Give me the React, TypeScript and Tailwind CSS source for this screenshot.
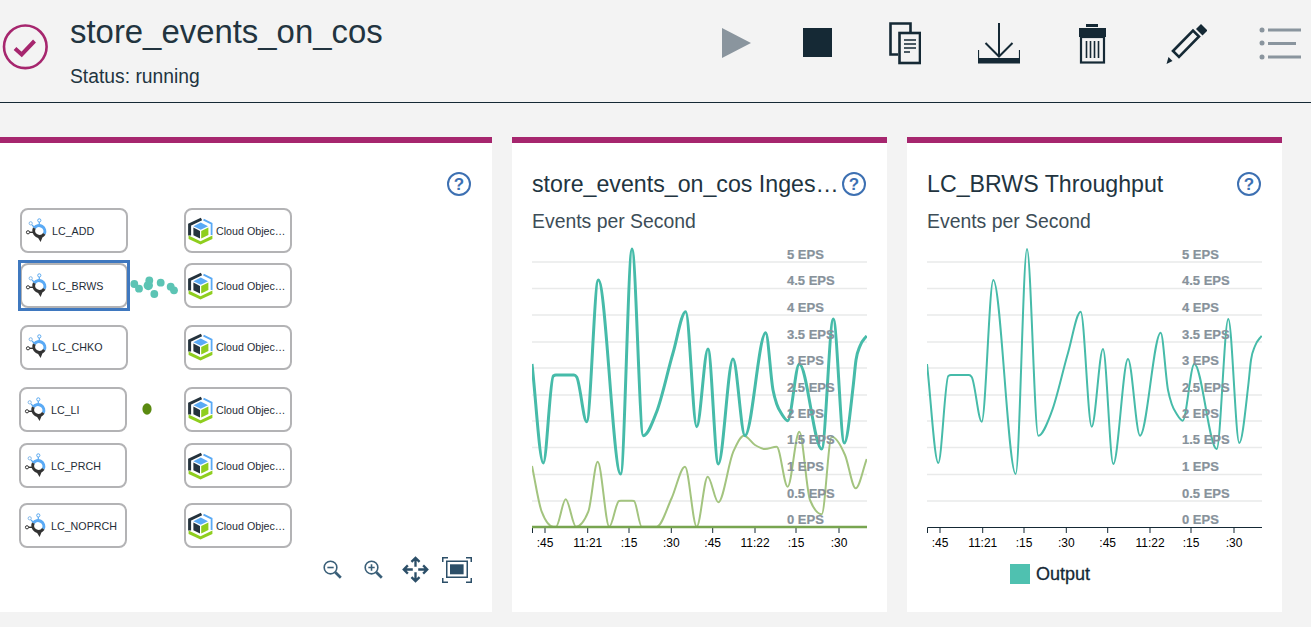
const teal: [number, number][] = [
  [532, 364], [543.3, 463], [553.3, 376], [556, 375], [574, 375], [576.7, 377], [586.7, 421.7], [598.3, 280], [620.7, 474], [632, 249],
  [643.3, 435.7], [656.7, 411.7], [673, 353], [685.7, 311.7], [696.7, 426.7], [708, 349], [718.3, 464], [733, 359], [745, 435.7],
  [765.7, 332.7], [773, 390], [776.7, 404], [781.7, 414], [787.7, 420.7], [799.3, 364], [821.7, 449], [833.3, 319], [844.3, 443], [853.3, 385], [856, 360], [860, 346], [866.7, 335.7],
];
const green: [number, number][] = [
  [532, 466], [541.7, 511.7], [553.3, 526.7], [556, 526.7], [565.7, 499.3], [576, 526.7], [588.3, 511.7], [597.7, 461.7], [609.3, 526.7],
  [619, 501], [621, 500.7], [632, 500.7], [634, 501], [641.7, 526.7], [656.7, 526.7], [671.7, 498], [685, 466.7], [696.7, 526.7],
  [707.7, 476.7], [718.3, 502.3], [733.3, 451.7], [744, 435.7], [755, 445], [765, 449], [776.7, 446.7], [787.7, 486.7], [799.3, 431.7],
  [810, 500], [821.7, 514.3], [831.7, 436.7], [845, 455], [855.7, 488.3], [866.7, 459],
];

function monotone(points: [number, number][]) {
  const n = points.length;
  const s: number[] = [];
  const w: number[] = [];
  for (let i = 0; i < n - 1; i++) {
    w.push(points[i + 1][0] - points[i][0]);
    s.push((points[i + 1][1] - points[i][1]) / w[i]);
  }
  const m: number[] = [s[0]];
  for (let i = 1; i < n - 1; i++) {
    const p = (w[i - 1] * s[i] + w[i] * s[i - 1]) / (w[i - 1] + w[i]);
    m.push((Math.sign(s[i - 1]) + Math.sign(s[i])) * Math.min(Math.abs(s[i - 1]), Math.abs(s[i]), 0.5 * Math.abs(p)));
  }
  m.push(s[n - 2]);
  let path = `M${points[0][0]} ${points[0][1]}`;
  for (let i = 0; i < n - 1; i++) {
    const h = w[i] / 3;
    path += `C${points[i][0] + h} ${points[i][1] + m[i] * h} ${points[i + 1][0] - h} ${points[i + 1][1] - m[i + 1] * h} ${points[i + 1][0]} ${points[i + 1][1]}`;
  }
  return path;
}

const grid = [262, 288.5, 315, 342, 368, 395, 421, 447.5, 474.5, 501];
const eps = [
  ["5 EPS", 259], ["4.5 EPS", 285], ["4 EPS", 312], ["3.5 EPS", 339], ["3 EPS", 365], ["2.5 EPS", 392],
  ["2 EPS", 418], ["1.5 EPS", 444], ["1 EPS", 471], ["0.5 EPS", 498], ["0 EPS", 524],
] as const;
const ticks = [
  [545, ":45"], [587.7, "11:21"], [629, ":15"], [671.3, ":30"], [712.7, ":45"], [755, "11:22"], [796, ":15"], [839, ":30"],
] as const;

function Chart({ both }: { both: boolean }) {
  return (
    <svg viewBox="532 245 335 310" className="w-[335px] h-[310px] block">
      {grid.map((y) => (
        <line key={y} x1="532" x2="867" y1={y} y2={y} stroke="#e9eaea" strokeWidth="1.4" />
      ))}
      <path d="M532.5 533V527.5H867" fill="none" stroke="#152935" strokeWidth="1" />
      {ticks.map(([x]) => (
        <line key={x} x1={x} x2={x} y1="527" y2="533" stroke="#152935" strokeWidth="1" />
      ))}
      {both && <path d={monotone(green)} fill="none" stroke="#a3c47f" strokeWidth="2" />}
      {both && <line x1="532" x2="867" y1="527" y2="527" stroke="#78a550" strokeWidth="2.4" />}
      <path d={monotone(teal)} fill="none" stroke="#46bba9" strokeWidth={both ? 3 : 2} />
      {eps.map(([t, y]) => (
        <text key={t} x="787" y={y} fontSize="13" fontWeight="700" fill="#87929b" stroke="#87929b" strokeWidth="0.2" fontFamily="'Liberation Sans', sans-serif">{t}</text>
      ))}
      {ticks.map(([x, t]) => (
        <text key={x} x={x} y="546.5" fontSize="12" textAnchor="middle" fill="#000" fontFamily="'Liberation Sans', sans-serif">{t}</text>
      ))}
    </svg>
  );
}

function Help() {
  return (
    <div className="w-6 h-6 shrink-0 rounded-full border-2 border-[#3d70b2] flex items-center justify-center text-[#3d70b2] text-[17px] font-bold leading-none">?</div>
  );
}

function LcIcon() {
  return (
    <svg viewBox="0 0 28 30" className="w-[28px] h-[30px] ml-[4px] shrink-0">
      <line x1="15.3" y1="6" x2="15.3" y2="10" stroke="#5aa9f0" strokeWidth="1.2" />
      <line x1="8" y1="9" x2="11" y2="12" stroke="#5aa9f0" strokeWidth="1.2" />
      <line x1="5.5" y1="16.3" x2="10" y2="16.3" stroke="#333" strokeWidth="1.4" />
      <circle cx="15.3" cy="4.4" r="1.6" fill="#fff" stroke="#5aa9f0" strokeWidth="1" />
      <circle cx="6.7" cy="7.3" r="1.6" fill="#fff" stroke="#7fb6e8" strokeWidth="1" />
      <circle cx="4" cy="16.3" r="1.6" fill="#fff" stroke="#333" strokeWidth="1" />
      <path d="M10.3 12.1A5.8 5.8 0 0 1 20.3 17.9" fill="none" stroke="#5aaaf5" strokeWidth="3" />
      <path d="M20.3 17.9A5.8 5.8 0 0 1 10.3 12.1" fill="none" stroke="#333" strokeWidth="3" />
      <path d="M13.5 21L16.6 26L19 20Z" fill="#333" />
    </svg>
  );
}

function CubeIcon() {
  return (
    <svg viewBox="0 0 28 30" className="w-[28px] h-[30px] ml-[4px] shrink-0">
      <path d="M13.5 3L1.6 8.6V19.5" fill="none" stroke="#25333d" strokeWidth="3" />
      <path d="M15.5 3.6L23.6 7.6V19" fill="none" stroke="#5aaaf5" strokeWidth="1.8" />
      <path d="M12.7 6.6L20 10.3L12.7 13.8L5.4 10.3Z" fill="#5aaaf5" />
      <path d="M5.4 11.6L12 14.9V22.6L5.4 19.3Z" fill="#25333d" />
      <path d="M13.2 14.9L20.4 11.4V19L13.2 22.6Z" fill="#8fce1e" />
      <path d="M0.6 19.6V23L12.5 28.4L24.4 23V19.6L12.5 25.2Z" fill="#8fce1e" />
    </svg>
  );
}

const nodes = [
  { x: 20, y: 71, w: "LC_ADD", selected: false },
  { x: 20, y: 126, w: "LC_BRWS", selected: true },
  { x: 20, y: 187.5, w: "LC_CHKO", selected: false },
  { x: 19, y: 250, w: "LC_LI", selected: false },
  { x: 19, y: 306, w: "LC_PRCH", selected: false },
  { x: 19, y: 366, w: "LC_NOPRCH", selected: false },
];

function Node({ x, y, label, selected, cube }: { x: number; y: number; label: string; selected?: boolean; cube?: boolean }) {
  return (
    <div
      className="absolute w-[107.5px] h-[45px] bg-white rounded-[8px] border-2 border-[#b3b3b5] flex items-center box-border text-[#1f2d37] text-[10.7px]"
      style={{ left: x, top: y }}
    >
      {selected && <div className="absolute -left-[4px] -right-[4px] -top-[5px] -bottom-[5px] border-[3px] border-[#3f78bf]" />}
      <div className="-ml-[2px] flex items-center">
        {cube ? <CubeIcon /> : <LcIcon />}
        <span className="whitespace-nowrap mt-[1px]">{label}</span>
      </div>
    </div>
  );
}

function Panel({ children }: { children: React.ReactNode }) {
  return <section className="relative h-[475px] bg-white border-t-[6px] border-[#a6266e] shrink-0 flex flex-col">{children}</section>;
}

function ChartPanel({ title, both, legend }: { title: string; both: boolean; legend?: boolean }) {
  return (
    <Panel>
      <div className="w-[375px] pl-5 pr-[21px] pt-[29px] flex items-center justify-between text-[#22343f]">
        <h2 className="text-[23.2px] leading-6 whitespace-nowrap">{title}</h2>
        <Help />
      </div>
      <div className="pl-5 mt-[13px] text-[19.4px] leading-6 text-[#3d4d57]">Events per Second</div>
      <div className="pl-5 mt-[12px]"><Chart both={both} /></div>
      {legend && (
        <div className="flex items-center pl-[103px] mt-[9px]">
          <div className="w-[20px] h-[20px] bg-[#4fc1b0]" />
          <span className="ml-[6px] text-[18px] leading-5 text-[#152935] [-webkit-text-stroke:0.3px_#152935]">Output</span>
        </div>
      )}
    </Panel>
  );
}

export default function App() {
  return (
    <div className="w-[1311px] h-[627px] overflow-hidden bg-[#f3f3f3] font-['Liberation_Sans',sans-serif]">
      <header className="h-[103px] border-b border-[#152935] flex items-start">
        <svg viewBox="0 0 50 50" className="w-[50px] h-[50px] mt-[22px] shrink-0">
          <circle cx="25.3" cy="24.8" r="21.3" fill="none" stroke="#a6266e" strokeWidth="2.6" />
          <path d="M15 26.5L21.7 32.5L34.5 19" fill="none" stroke="#a6266e" strokeWidth="4" />
        </svg>
        <div className="ml-[20px]">
          <h1 className="mt-[14px] text-[32.9px] leading-9 text-[#22343f]">store_events_on_cos</h1>
          <p className="mt-[15px] text-[19.3px] leading-6 text-[#22343f]">Status: running</p>
        </div>
        <div className="ml-auto mr-[10px] mt-[22px] flex items-start">
          <svg viewBox="722 22 29 44" className="w-[29px] h-[44px]">
            <path d="M722 28V58L751 43Z" fill="#8a959e" />
          </svg>
          <svg viewBox="803 22 29 44" className="w-[29px] h-[44px] ml-[52px]">
            <rect x="803" y="28" width="29" height="29" fill="#152935" />
          </svg>
          <svg viewBox="889 22 32 44" className="w-[32px] h-[44px] ml-[57px]" fill="none" stroke="#152935">
            <path d="M898 54.5H890.5V23.5H910.5V32" strokeWidth="2.6" />
            <rect x="899.5" y="33" width="20.5" height="30" strokeWidth="2.6" />
            <path d="M904 40H916M904 44H916M904 48H916M904 52H910" strokeWidth="1.5" />
          </svg>
          <svg viewBox="978 22 42 44" className="w-[42px] h-[44px] ml-[57px]" fill="none" stroke="#152935">
            <path d="M999 23V56M985.5 43L999 56.5L1012.5 43" strokeWidth="2" />
            <path d="M978.5 50V60M1019.5 50V60" strokeWidth="1.2" />
            <rect x="978" y="58" width="42" height="5.5" fill="#152935" stroke="none" />
          </svg>
          <svg viewBox="1079 22 27 44" className="w-[27px] h-[44px] ml-[59px]" fill="none" stroke="#152935">
            <rect x="1086" y="24" width="12" height="3" fill="#152935" stroke="none" />
            <rect x="1079" y="28" width="27" height="9" fill="#152935" stroke="none" />
            <rect x="1081" y="37" width="23" height="25.5" strokeWidth="2.2" />
            <path d="M1086.5 41V58M1090.5 41V58M1094.5 41V58M1098.5 41V58" strokeWidth="1.6" />
          </svg>
          <svg viewBox="1166 22 41 44" className="w-[41px] h-[44px] ml-[60px]" fill="none" stroke="#152935">
            <path d="M1174 55L1194 34.5L1200 40.5L1180 61Z" strokeWidth="2.6" transform="translate(-1 -4)" />
            <path d="M1196 29L1201 24L1207.5 30.5L1202.5 35.5Z" fill="#152935" stroke="none" />
            <path d="M1166.5 64L1168.5 57L1172.5 61Z" fill="#152935" stroke="none" />
          </svg>
          <svg viewBox="1259 22 42 44" className="w-[42px] h-[44px] ml-[52px]" fill="#8a959e">
            <circle cx="1262" cy="30" r="2.5" />
            <circle cx="1262" cy="43" r="2.5" />
            <circle cx="1262" cy="57" r="2.5" />
            <rect x="1268" y="28.5" width="33" height="3" />
            <rect x="1268" y="42" width="28" height="3" />
            <rect x="1268" y="55.5" width="33" height="3" />
          </svg>
        </div>
      </header>
      <main className="flex gap-5 pt-[34px]">
        <Panel>
          <div className="w-[492px] flex-1 flex flex-col">
            <div className="flex justify-end pr-[21px] pt-[29px]"><Help /></div>
            <div className="relative flex-1">
              {nodes.map((n) => (
                <Node key={n.w} x={n.x} y={n.y - 59} label={n.w} selected={n.selected} />
              ))}
              {nodes.map((n, i) => (
                <Node key={i} x={184} y={n.y - 59} label="Cloud Objec…" cube />
              ))}
              <svg viewBox="130 275 50 25" className="absolute left-[130px] top-[79px] w-[50px] h-[25px] blur-[0.6px]" fill="#5cc4b4">
                <circle cx="134.3" cy="284" r="3.9" /><circle cx="139" cy="288.7" r="3.9" />
                <circle cx="148.3" cy="285.5" r="4.7" /><circle cx="149.3" cy="280.5" r="3.9" />
                <circle cx="160.7" cy="282.7" r="3.9" /><circle cx="154.3" cy="294" r="3.9" />
                <circle cx="170.7" cy="286.7" r="3.9" /><circle cx="174" cy="290.3" r="3.9" />
              </svg>
              <svg viewBox="0 0 12 14" className="absolute left-[141px] top-[206px] w-[12px] h-[14px] blur-[0.5px]">
                <ellipse cx="6" cy="7" rx="4.6" ry="5.8" fill="#5a8a10" />
              </svg>
            </div>
            <div className="flex justify-end items-center pr-[20px] pb-[29px]">
              <svg viewBox="0 0 24 24" className="w-[19px] h-[19px]" fill="none" stroke="#3a5f78">
                <circle cx="9.5" cy="9.5" r="8" strokeWidth="2" />
                <path d="M5.5 9.5H13.5" strokeWidth="2" />
                <path d="M15.5 15.5L22.5 22.5" strokeWidth="3.4" />
              </svg>
              <svg viewBox="0 0 24 24" className="w-[19px] h-[19px] ml-[22px]" fill="none" stroke="#3a5f78">
                <circle cx="9.5" cy="9.5" r="8" strokeWidth="2" />
                <path d="M5.5 9.5H13.5M9.5 5.5V13.5" strokeWidth="2" />
                <path d="M15.5 15.5L22.5 22.5" strokeWidth="3.4" />
              </svg>
              <svg viewBox="0 0 30 30" className="w-[27px] h-[27px] ml-[19px]" fill="none" stroke="#2c4f68" strokeWidth="2.6">
                <path d="M15 2V12M10.5 6.5L15 2L19.5 6.5M15 18V28M10.5 23.5L15 28L19.5 23.5M2 15H12M6.5 10.5L2 15L6.5 19.5M18 15H28M23.5 10.5L28 15L23.5 19.5" />
              </svg>
              <svg viewBox="0 0 30 26" className="w-[30px] h-[26px] ml-[13px]" fill="none" stroke="#2c4f68">
                <path d="M.75 5V.75H6M24 .75H29.25V5M.75 21V25.25H6M24 25.25H29.25V21" strokeWidth="1.5" />
                <rect x="4.75" y="4.25" width="20.5" height="16" strokeWidth="1.5" />
                <rect x="8" y="7.3" width="13.6" height="10" fill="#2c4f68" stroke="none" />
              </svg>
            </div>
          </div>
        </Panel>
        <ChartPanel title="store_events_on_cos Inges…" both />
        <ChartPanel title="LC_BRWS Throughput" both={false} legend />
      </main>
    </div>
  );
}
